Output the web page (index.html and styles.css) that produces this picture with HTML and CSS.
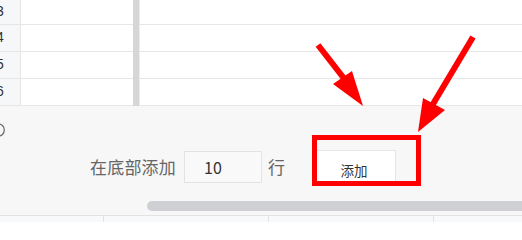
FILE: index.html
```html
<!DOCTYPE html>
<html lang="zh">
<head>
<meta charset="utf-8">
<link rel="stylesheet" href="styles.css">
</head>
<body>
<div class="page">
  <div class="sheet">
    <div class="row first">
      <div class="num">3</div><div class="cell"></div><div class="bar"></div><div class="cell wide"></div>
    </div>
    <div class="row">
      <div class="num">4</div><div class="cell"></div><div class="bar"></div><div class="cell wide"></div>
    </div>
    <div class="row">
      <div class="num">5</div><div class="cell"></div><div class="bar"></div><div class="cell wide"></div>
    </div>
    <div class="row">
      <div class="num">6</div><div class="cell"></div><div class="bar"></div><div class="cell wide"></div>
    </div>
  </div>
  <div class="panel">
    <div class="icon-row">
      <svg class="ring" width="14" height="14" viewBox="0 0 14 14"><circle cx="7" cy="7" r="6.3" fill="none" stroke="#666" stroke-width="1.2"/></svg>
    </div>
    <div class="form-row">
      <span class="label">在底部添加</span>
      <div class="input">10</div>
      <span class="unit">行</span>
      <div class="btn">添加</div>
    </div>
    <div class="scroll"><div class="thumb"></div></div>
  </div>
  <div class="foot">
    <div class="fcell c1"></div><div class="fcell c2"></div><div class="fcell c2"></div><div class="fcell rest"></div>
  </div>
  <div class="highlight"></div>
  <svg class="arrows" width="522" height="222" viewBox="0 0 522 222">
    <line x1="318" y1="45" x2="346" y2="81" stroke="#ff0000" stroke-width="6"/>
    <polygon points="333,84 352,71 363,106" fill="#ff0000"/>
    <line x1="473" y1="37" x2="433" y2="104" stroke="#ff0000" stroke-width="6"/>
    <polygon points="423,98 445,110 418,132" fill="#ff0000"/>
  </svg>
</div>
</body>
</html>
```
FILE: styles.css
```css
html, body {
  margin: 0;
  padding: 0;
  background: #fff;
  overflow: hidden;
}
.page {
  position: relative;
  width: 522px;
  height: 222px;
  overflow: hidden;
  font-family: "Noto Sans CJK SC", "Noto Sans", sans-serif;
}
.sheet {
  margin-left: -20px;
}
.row {
  display: flex;
  height: 27px;
}
.row.first {
  height: 25px;
}
.num {
  width: 40px;
  flex: none;
  background: #f6f7f9;
  border-right: 1px solid #e6e6e6;
  border-bottom: 1px solid #e6e6e6;
  color: #333;
  font-family: "Liberation Sans", sans-serif;
  font-size: 14px;
  display: flex;
  align-items: center;
  justify-content: center;
  box-sizing: border-box;
  width: 41px;
  padding-bottom: 3px;
}
.cell {
  width: 112px;
  flex: none;
  border-bottom: 1px solid #e6e6e6;
  box-sizing: border-box;
}
.bar {
  width: 6px;
  flex: none;
  background: #d6d6d6;
}
.cell.wide {
  flex: 1;
  border-left: 1px solid #ececec;
}
.panel {
  height: 109px;
  background: #f7f7f7;
  border-bottom: 1px solid #e3e3e3;
  display: flex;
  flex-direction: column;
  box-sizing: content-box;
}
.icon-row {
  padding-top: 17px;
  height: 14px;
}
.ring {
  display: block;
  margin-left: -9px;
}
.form-row {
  margin-top: 13px;
  height: 33px;
  display: flex;
  align-items: center;
  padding-left: 90px;
}
.label {
  font-size: 17px;
  color: #666;
  letter-spacing: 0.2px;
}
.input {
  margin-left: 8px;
  width: 78px;
  height: 32px;
  box-sizing: border-box;
  border: 1px solid #e3e3e3;
  background: #f9f9f9;
  color: #333;
  font-size: 16px;
  padding-left: 19px;
  display: flex;
  align-items: center;
}
.unit {
  margin-left: 6px;
  font-size: 17px;
  color: #666;
}
.btn {
  margin-left: 30px;
  width: 81px;
  height: 33px;
  box-sizing: border-box;
  background: #fff;
  border: 1px solid #e6e6e6;
  font-size: 13.5px;
  color: #333;
  display: flex;
  align-items: center;
  justify-content: center;
  padding-top: 7px;
  padding-right: 3px;
}
.scroll {
  margin-top: 18px;
  padding-left: 147px;
  height: 10px;
}
.thumb {
  width: 420px;
  height: 10px;
  border-radius: 5px;
  background: #cfd0d3;
}
.foot {
  display: flex;
  height: 10px;
  background: #f8f9fb;
}
.fcell {
  border-right: 1px solid #e3e3e3;
  flex: none;
}
.c1 { width: 103px; }
.c2 { width: 164px; }
.fcell.rest { flex: 1; border-right: none; }
.highlight {
  position: absolute;
  left: 312px;
  top: 135px;
  width: 109px;
  height: 51px;
  box-sizing: border-box;
  border: 5px solid #ff0000;
}
.arrows {
  position: absolute;
  left: 0;
  top: 0;
}
```
